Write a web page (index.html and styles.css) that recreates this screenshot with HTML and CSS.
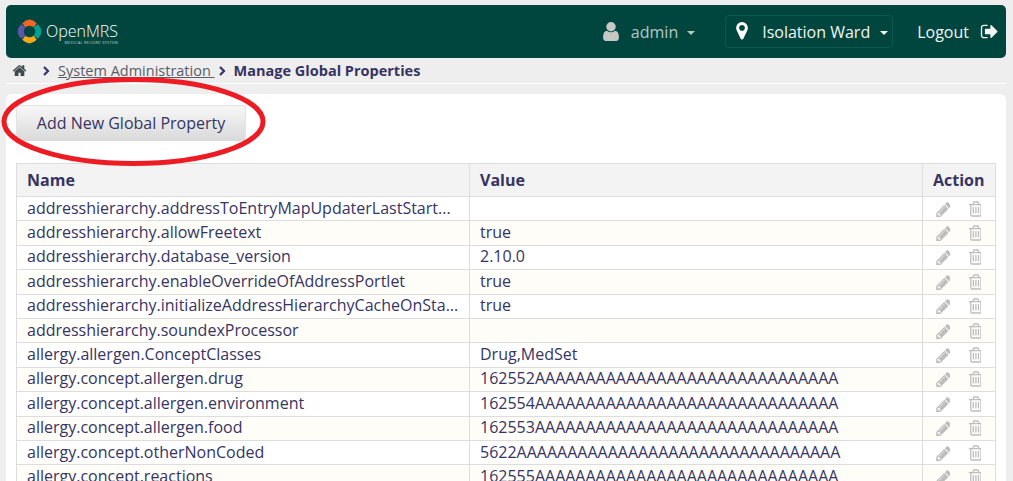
FILE: index.html
```html
<!DOCTYPE html>
<html lang="en">

<head>
    <meta charset="UTF-8">
    <title>Manage Global Properties</title>
    <link rel="stylesheet" href="styles.css">
</head>

<body>
    <svg class="icon-defs" width="0" height="0">
        <symbol id="i-home" viewBox="0 128 1792 1408"><path d="M1472 992v480q0 26-19 45t-45 19h-384v-384h-256v384h-384q-26 0-45-19t-19-45v-480q0-1 .5-3t.5-3l575-474 575 474q1 2 1 6zm223-69l-62 74q-8 9-21 11h-3q-13 0-21-7l-692-577-692 577q-12 8-24 7-13-2-21-11l-62-74q-8-10-7-23.500t11-21.500l719-599q32-26 76-26t76 26l244 204v-195q0-14 9-23t23-9h192q14 0 23 9t9 23v408l219 182q10 8 11 21.500t-7 23.500z"/></symbol>
        <symbol id="i-user" viewBox="256 128 1280 1536"><path d="M1536 1399q0 109-62.500 187t-150.500 78h-854q-88 0-150.500-78t-62.500-187q0-85 8.500-160.500t31.500-152 58.500-131 94-89 134.500-34.500q131 128 313 128t313-128q76 0 134.500 34.500t94 89 58.500 131 31.500 152 8.500 160.500zm-256-887q0 159-112.500 271.500t-271.500 112.500-271.500-112.500-112.500-271.500 112.500-271.500 271.500-112.500 271.500 112.500 112.500 271.500z"/></symbol>
        <symbol id="i-marker" viewBox="0 0 1024 1664"><path d="M768 512q0-106-75-181t-181-75-181 75-75 181 75 181 181 75 181-75 75-181zm256 0q0 109-33 179l-364 774q-16 33-47.500 52t-67.500 19-67.500-19-46.500-52l-365-774q-33-70-33-179 0-212 150-362t362-150 362 150 150 362z"/></symbol>
        <symbol id="i-logout" viewBox="0 192 1664 1408"><path d="M704 1440q0 4 1 20t.5 26.500-3 23.500-10 19.500-20.500 6.500h-320q-119 0-203.500-84.500t-84.500-203.500v-704q0-119 84.500-203.500t203.500-84.500h320q13 0 22.500 9.500t9.500 22.500q0 4 1 20t.5 26.500-3 23.500-10 19.500-20.500 6.500h-320q-66 0-113 47t-47 113v704q0 66 47 113t113 47h312l11.500 1 11.500 3 8 5.500 7 9 2 13.500zm928-544q0 26-19 45l-544 544q-19 19-45 19t-45-19-19-45v-288h-448q-26 0-45-19t-19-45v-384q0-26 19-45t45-19h448v-288q0-26 19-45t45-19 45 19l544 544q19 19 19 45z"/></symbol>
        <symbol id="i-edit" viewBox="0 128 1536 1536"><path d="M491 1536l91-91-235-235-91 91v107h128v128h107zm523-928q0-22-22-22-10 0-17 7l-542 542q-7 7-7 17 0 22 22 22 10 0 17-7l542-542q7-7 7-17zm-54-192l416 416-832 832h-416v-416zm683 96q0 53-37 90l-166 166-416-416 166-165q36-38 90-38 53 0 91 38l235 234q37 39 37 91z"/></symbol>
        <symbol id="i-trash" viewBox="0 128 1408 1536"><path d="M704 736v576q0 14-9 23t-23 9h-64q-14 0-23-9t-9-23v-576q0-14 9-23t23-9h64q14 0 23 9t9 23zm256 0v576q0 14-9 23t-23 9h-64q-14 0-23-9t-9-23v-576q0-14 9-23t23-9h64q14 0 23 9t9 23zm256 0v576q0 14-9 23t-23 9h-64q-14 0-23-9t-9-23v-576q0-14 9-23t23-9h64q14 0 23 9t9 23zm128 724v-948h-896v948q0 22 7 40.500t14.500 27 10.500 8.500h832q3 0 10.500-8.500t14.500-27 7-40.500zm-672-1076h448l-48-117q-7-9-17-11h-317q-10 2-17 11zm928 32v64q0 14-9 23t-23 9h-96v948q0 83-47 143.500t-113 60.500h-832q-66 0-113-58.500t-47-141.500v-952h-96q-14 0-23-9t-9-23v-64q0-14 9-23t23-9h309l70-167q15-37 54-63t79-26h320q40 0 79 26t54 63l70 167h309q14 0 23 9t9 23z"/></symbol>
        <symbol id="i-chevron" viewBox="0 0 8 10"><path d="M2 1l4 4-4 4" fill="none" stroke="currentColor" stroke-width="2.2"/></symbol>
    </svg>

    <header class="topbar">
        <a class="brand" href="#">
            <svg class="brand-mark" viewBox="0 0 26 26" width="27" height="27">
                <path d="M6 5Q13 -2 20 5L17 9Q13 6 9 9Z" fill="#f26522"/>
                <path d="M21 6Q28 13 21 20L17 17Q20 13 17 9Z" fill="#00a08e"/>
                <path d="M20 21Q13 28 6 21L9 17Q13 20 17 17Z" fill="#f7a81b"/>
                <path d="M5 20Q-2 13 5 6L9 9Q6 13 9 17Z" fill="#5b57a6"/>
            </svg>
            <span class="brand-text">
                <span class="brand-name">OpenMRS</span>
                <span class="brand-sub">MEDICAL RECORD SYSTEM</span>
            </span>
        </a>
        <nav class="topnav">
            <span class="nav-user">
                <svg class="icon icon-user"><use href="#i-user"/></svg>
                admin
                <span class="caret"></span>
            </span>
            <span class="nav-location">
                <svg class="icon icon-marker"><use href="#i-marker"/></svg>
                Isolation Ward
                <span class="caret"></span>
            </span>
            <a class="nav-logout" href="#">
                Logout
                <svg class="icon icon-logout"><use href="#i-logout"/></svg>
            </a>
        </nav>
    </header>

    <div class="breadcrumb">
        <svg class="icon icon-home"><use href="#i-home"/></svg>
        <svg class="icon icon-chevron first"><use href="#i-chevron"/></svg>
        <a href="#">System Administration&nbsp;</a>
        <svg class="icon icon-chevron"><use href="#i-chevron"/></svg>
        <strong>Manage Global Properties</strong>
    </div>

    <main class="panel">
        <button class="add-button" type="button">Add New Global Property</button>

        <table class="props">
            <thead>
                <tr><th>Name</th><th>Value</th><th class="action-col">Action</th></tr>
            </thead>
            <tbody>
                <tr><td>addresshierarchy.addressToEntryMapUpdaterLastStart...</td><td></td><td class="actions"><svg class="icon icon-edit"><use href="#i-edit"/></svg><svg class="icon icon-trash"><use href="#i-trash"/></svg></td></tr>
                <tr><td>addresshierarchy.allowFreetext</td><td>true</td><td class="actions"><svg class="icon icon-edit"><use href="#i-edit"/></svg><svg class="icon icon-trash"><use href="#i-trash"/></svg></td></tr>
                <tr><td>addresshierarchy.database_version</td><td>2.10.0</td><td class="actions"><svg class="icon icon-edit"><use href="#i-edit"/></svg><svg class="icon icon-trash"><use href="#i-trash"/></svg></td></tr>
                <tr><td>addresshierarchy.enableOverrideOfAddressPortlet</td><td>true</td><td class="actions"><svg class="icon icon-edit"><use href="#i-edit"/></svg><svg class="icon icon-trash"><use href="#i-trash"/></svg></td></tr>
                <tr><td>addresshierarchy.initializeAddressHierarchyCacheOnSta...</td><td>true</td><td class="actions"><svg class="icon icon-edit"><use href="#i-edit"/></svg><svg class="icon icon-trash"><use href="#i-trash"/></svg></td></tr>
                <tr><td>addresshierarchy.soundexProcessor</td><td></td><td class="actions"><svg class="icon icon-edit"><use href="#i-edit"/></svg><svg class="icon icon-trash"><use href="#i-trash"/></svg></td></tr>
                <tr><td>allergy.allergen.ConceptClasses</td><td>Drug,MedSet</td><td class="actions"><svg class="icon icon-edit"><use href="#i-edit"/></svg><svg class="icon icon-trash"><use href="#i-trash"/></svg></td></tr>
                <tr><td>allergy.concept.allergen.drug</td><td>162552AAAAAAAAAAAAAAAAAAAAAAAAAAAAAA</td><td class="actions"><svg class="icon icon-edit"><use href="#i-edit"/></svg><svg class="icon icon-trash"><use href="#i-trash"/></svg></td></tr>
                <tr><td>allergy.concept.allergen.environment</td><td>162554AAAAAAAAAAAAAAAAAAAAAAAAAAAAAA</td><td class="actions"><svg class="icon icon-edit"><use href="#i-edit"/></svg><svg class="icon icon-trash"><use href="#i-trash"/></svg></td></tr>
                <tr><td>allergy.concept.allergen.food</td><td>162553AAAAAAAAAAAAAAAAAAAAAAAAAAAAAA</td><td class="actions"><svg class="icon icon-edit"><use href="#i-edit"/></svg><svg class="icon icon-trash"><use href="#i-trash"/></svg></td></tr>
                <tr><td>allergy.concept.otherNonCoded</td><td>5622AAAAAAAAAAAAAAAAAAAAAAAAAAAAAAAA</td><td class="actions"><svg class="icon icon-edit"><use href="#i-edit"/></svg><svg class="icon icon-trash"><use href="#i-trash"/></svg></td></tr>
                <tr><td>allergy.concept.reactions</td><td>162555AAAAAAAAAAAAAAAAAAAAAAAAAAAAAA</td><td class="actions"><svg class="icon icon-edit"><use href="#i-edit"/></svg><svg class="icon icon-trash"><use href="#i-trash"/></svg></td></tr>
            </tbody>
        </table>
    </main>

    <!-- red ring somebody drew on the screenshot -->
    <svg class="annotation" width="270" height="92" viewBox="0 0 270 92">
        <ellipse cx="133.500" cy="45.500" rx="129.500" ry="42" fill="none" stroke="#ed1c24" stroke-width="5"/>
    </svg>
</body>

</html>
```

FILE: styles.css
```css
html {
    height: 100%;
    overflow: hidden;
}

body {
    margin: 0;
    padding: 5px 7px 0 6px;
    background-color: #eeeeee;
    font-family: "Open Sans", Arial, sans-serif;
    font-size: 16px;
    color: #363463;
    position: relative;
}

a {
    color: inherit;
}

.icon-defs {
    position: absolute;
}

.icon {
    fill: currentColor;
    display: inline-block;
    flex: none;
}

.topbar {
    height: 53px;
    background-color: #00463f;
    border-radius: 5px;
    display: flex;
    align-items: center;
    justify-content: space-between;
    padding: 0 8px 0 10px;
}

.brand {
    display: flex;
    align-items: center;
    gap: 3px;
    color: #fff;
    text-decoration: none;
}

.brand-text {
    display: flex;
    flex-direction: column;
    align-items: flex-end;
    padding-top: 3px;
}

.brand-name {
    font-size: 16px;
    line-height: 18px;
    font-weight: 300;
}

.brand-sub {
    font-size: 4px;
    line-height: 5px;
    letter-spacing: 0.2px;
    color: #b9cdca;
}

.topnav {
    display: flex;
    align-items: center;
    font-size: 16px;
}

.nav-user {
    display: flex;
    align-items: center;
    color: #b4c8c4;
    margin-right: 30px;
}

.icon-user {
    width: 16px;
    height: 19px;
    color: #c4c9c4;
    margin-right: 12px;
}

.caret {
    width: 0;
    height: 0;
    border-top: 4px solid currentColor;
    border-left: 4px solid transparent;
    border-right: 4px solid transparent;
    margin-left: 9px;
    margin-top: 2px;
}

.nav-location {
    display: flex;
    align-items: center;
    width: 168px;
    height: 33px;
    box-sizing: border-box;
    padding-left: 10px;
    border: 1px solid #065a50;
    border-radius: 4px;
    color: #f2f5f2;
    margin-right: 24px;
}

.icon-marker {
    width: 12px;
    height: 19px;
    color: #fff;
    margin-right: 14px;
}

.nav-location .caret {
    margin-left: 10px;
}

.nav-logout {
    display: flex;
    align-items: center;
    color: #f2f5f2;
    text-decoration: none;
}

.icon-logout {
    width: 18px;
    height: 15px;
    margin-left: 11px;
}

.breadcrumb {
    height: 26px;
    box-sizing: border-box;
    border-bottom: 1px solid #fff;
    display: flex;
    align-items: center;
    font-size: 14.500px;
    padding: 0 0 1px 6px;
}

.icon-home {
    width: 15px;
    height: 12px;
    color: #3f4a4a;
    margin-top: -1px;
}

.icon-chevron {
    width: 8px;
    height: 10px;
    margin: 2px 5px 0 3px;
}

.icon-chevron.first {
    margin-left: 15px;
    margin-right: 8px;
}

.breadcrumb a {
    color: #5b5b68;
}

.breadcrumb strong {
    margin-left: 3px;
}

.panel {
    margin-top: 10px;
    background-color: #fff;
    border-radius: 6px;
    padding: 11px 10px 30px;
}

.add-button {
    display: block;
    width: 230px;
    height: 36px;
    padding: 0 0 2px;
    font-family: inherit;
    font-size: 16px;
    color: #363463;
    border: 1px solid #e4e4e4;
    border-bottom: none;
    border-radius: 3px;
    background: linear-gradient(#f7f7f7, #d9d9d9);
}

.props {
    width: 100%;
    margin-top: 22px;
    border-collapse: collapse;
    table-layout: fixed;
}

.props th,
.props td {
    border: 1px solid #dddddd;
    padding: 0 10px;
    text-align: left;
    white-space: nowrap;
    overflow: hidden;
}

.props th {
    height: 32px;
    font-size: 16px;
    font-weight: 700;
    background-color: #f3f3f3;
}

.props td {
    height: 21.400px;
    padding-bottom: 2px;
    line-height: 20px;
}

.props tbody tr:nth-child(even) {
    background-color: #fffdf8;
}

.props .action-col {
    width: 52px;
}

.actions {
    color: #bdbdbd;
}

.actions .icon {
    vertical-align: -3px;
}

.icon-edit {
    width: 15px;
    height: 15px;
    margin-left: 2px;
}

.icon-trash {
    width: 14px;
    height: 16px;
    margin-left: 17px;
}

.annotation {
    position: absolute;
    left: 0;
    top: 76px;
}
```
